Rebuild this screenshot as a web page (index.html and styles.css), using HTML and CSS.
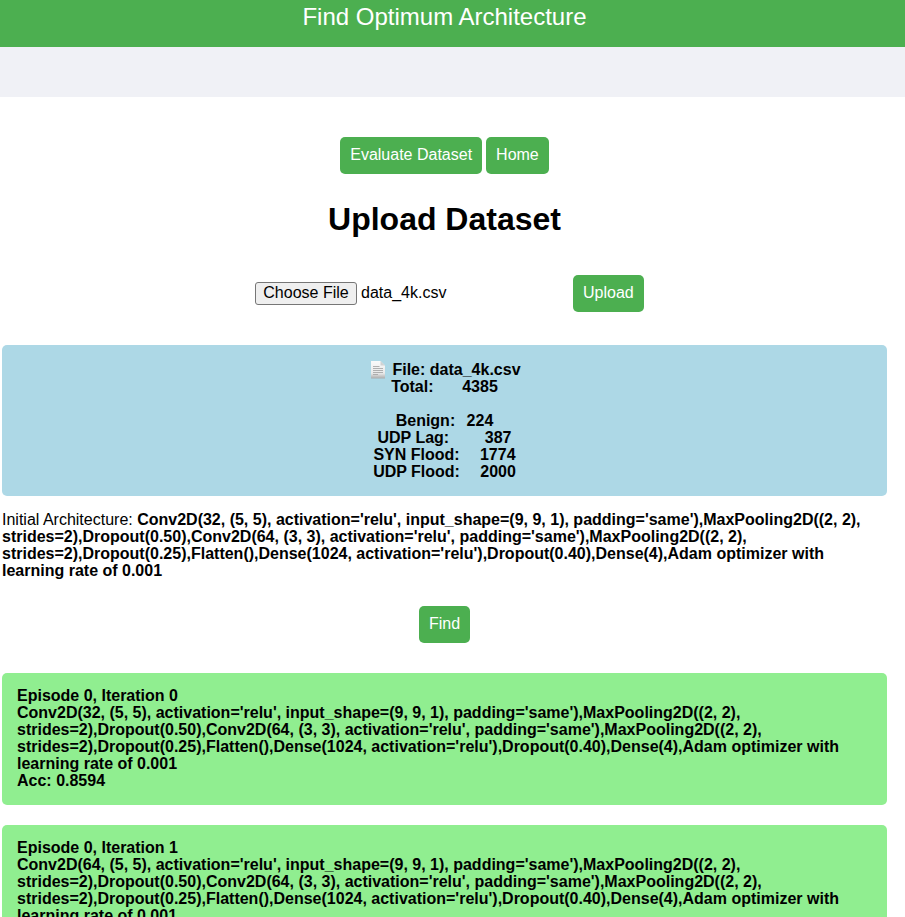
FILE: index.html
```html
<!DOCTYPE html>
<html lang="en">
<head>
<meta charset="utf-8">
<title>Find Optimum Architecture</title>
<link rel="stylesheet" href="styles.css">
</head>
<body>
<header class="banner">Find Optimum Architecture</header>
<div class="strip"></div>
<main class="content">
  <nav class="links"><a class="btn">Evaluate Dataset</a><a class="btn">Home</a></nav>
  <h1 class="title">Upload Dataset</h1>
  <form class="upload">
    <div class="file"><button type="button" class="choose">Choose File</button><span class="chosen">data_4k.csv</span></div>
    <a class="btn">Upload</a>
  </form>
  <section class="summary">
    <div class="filename"><svg class="page" width="16" height="18" viewBox="0 0 16 18"><defs><linearGradient id="paper" x1="0" y1="0" x2="0" y2="1"><stop offset="0" stop-color="#fafafa"/><stop offset=".7" stop-color="#e9e9e9"/><stop offset="1" stop-color="#aaa"/></linearGradient></defs><path d="M1 0H10.5L15 4.5V17.5H1Z" fill="url(#paper)"/><path d="M10.5 0V4.5H15Z" fill="#cfd2d3"/><path d="M3 5.5H9.5M3 7.5H13M3 9.5H13M3 11.5H13M3 13.5H8" stroke="#a8a8a8" stroke-width=".9"/></svg><span>File: data_4k.csv</span></div>
    <div class="row total"><span>Total:</span><span>4385</span></div>
    <div class="row benign"><span>Benign:</span><span>224</span></div>
    <div class="row lag"><span>UDP Lag:</span><span>387</span></div>
    <div class="row flood"><span>SYN Flood:</span><span>1774</span></div>
    <div class="row flood"><span>UDP Flood:</span><span>2000</span></div>
  </section>
  <p class="initial">Initial Architecture: <b>Conv2D(32, (5, 5), activation='relu', input_shape=(9, 9, 1), padding='same'),MaxPooling2D((2, 2), strides=2),Dropout(0.50),Conv2D(64, (3, 3), activation='relu', padding='same'),MaxPooling2D((2, 2), strides=2),Dropout(0.25),Flatten(),Dense(1024, activation='relu'),Dropout(0.40),Dense(4),Adam optimizer with learning rate of 0.001</b></p>
  <div class="find"><a class="btn">Find</a></div>
  <section class="result">Episode 0, Iteration 0<br>Conv2D(32, (5, 5), activation='relu', input_shape=(9, 9, 1), padding='same'),MaxPooling2D((2, 2), strides=2),Dropout(0.50),Conv2D(64, (3, 3), activation='relu', padding='same'),MaxPooling2D((2, 2), strides=2),Dropout(0.25),Flatten(),Dense(1024, activation='relu'),Dropout(0.40),Dense(4),Adam optimizer with learning rate of 0.001<br>Acc: 0.8594</section>
  <section class="result">Episode 0, Iteration 1<br>Conv2D(64, (5, 5), activation='relu', input_shape=(9, 9, 1), padding='same'),MaxPooling2D((2, 2), strides=2),Dropout(0.50),Conv2D(64, (3, 3), activation='relu', padding='same'),MaxPooling2D((2, 2), strides=2),Dropout(0.25),Flatten(),Dense(1024, activation='relu'),Dropout(0.40),Dense(4),Adam optimizer with learning rate of 0.001</section>
</main>
</body>
</html>
```
FILE: styles.css
```css
* { box-sizing: border-box; }
body {
  margin: 0;
  height: 917px;
  overflow: hidden;
  background: #fff;
  color: #000;
  font: 16px/17px "Liberation Sans", Arial, sans-serif;
}
.banner {
  height: 47px;
  padding: 3px 16px 0 0;
  background: #4caf50;
  color: #fff;
  font-size: 24px;
  line-height: 27px;
  text-align: center;
}
.strip { height: 50px; background: #f0f1f6; }
.content { width: 885px; margin-left: 2px; padding-top: 40px; }
.links { display: flex; justify-content: center; gap: 4px; }
.btn {
  display: block;
  height: 37px;
  padding: 9px 10px 11px;
  border-radius: 5px;
  background: #4caf50;
  color: #fff;
}
.title {
  margin: 27px 0 38px;
  font-size: 32px;
  line-height: 36px;
  text-align: center;
}
.upload { display: flex; align-items: center; margin: 0 0 33px 253px; }
.file { display: flex; align-items: center; gap: 4px; width: 318px; }
.choose {
  width: 102px;
  height: 23px;
  padding: 0 0 2px;
  border: 1px solid #767676;
  border-radius: 3px;
  background: #efefef;
  color: #000;
  font: inherit;
}
.chosen { padding-bottom: 2px; }
.summary {
  height: 151px;
  padding-top: 16px;
  border-radius: 5px;
  background: #add8e6;
  font-weight: bold;
}
.filename { display: flex; justify-content: center; height: 17px; gap: 6px; padding-left: 2px; }
.row { display: flex; justify-content: center; }
.total { gap: 28.7px; margin-bottom: 17px; }
.benign { gap: 11.4px; }
.lag { gap: 35.6px; }
.flood { gap: 20.3px; }
.initial { margin: 15px 0 27px; }
.find { display: flex; justify-content: center; margin-bottom: 30px; }
.result {
  padding: 14px 15px 16px;
  margin-bottom: 20px;
  border-radius: 5px;
  background: #90ee90;
  font-weight: bold;
}
```
